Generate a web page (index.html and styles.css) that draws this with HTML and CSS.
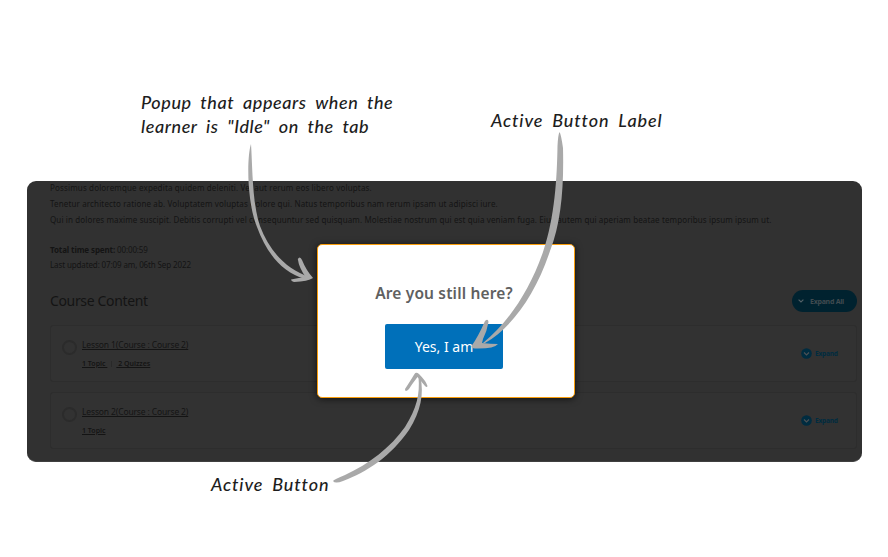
FILE: index.html
```
<!DOCTYPE html>
<html lang="en">
<head>
<meta charset="utf-8">
<title>Idle popup</title>
<link rel="stylesheet" href="styles.css">
</head>
<body>
<main class="canvas">
  <section class="screen">
    <div class="copy">
      <p class="l1">Possimus doloremque expedita quidem deleniti. Vel aut rerum eos libero voluptas.</p>
      <p class="l2">Tenetur architecto ratione ab. Voluptatem voluptas dolore qui. Natus temporibus nam rerum ipsam ut adipisci iure.</p>
      <p class="l3">Qui in dolores maxime suscipit. Debitis corrupti vel consequuntur sed quisquam. Molestiae nostrum qui est quia veniam fuga. Eius autem qui aperiam beatae temporibus ipsum ipsum ut.</p>
    </div>
    <div class="meta">
      <p><b>Total time spent:</b> 00:00:59</p>
      <p class="upd">Last updated: 07:09 am, 06th Sep 2022</p>
    </div>
    <div class="head">
      <h2>Course Content</h2>
      <span class="all"><svg width="6" height="4" viewBox="0 0 6 4"><path d="M.6.6 3 3 5.4.6"/></svg>Expand All</span>
    </div>
    <article class="card">
      <i class="ring"></i>
      <div class="info">
        <a class="title">Lesson 1(Course : Course 2)</a>
        <div class="sub"><u>1 Topic&nbsp;</u><i class="bar"></i><u>&nbsp;2 Quizzes</u></div>
      </div>
      <span class="expand"><svg width="11" height="11" viewBox="0 0 11 11"><circle cx="5.5" cy="5.5" r="5.3"/><path d="M3 4.5 5.5 7 8 4.5"/></svg><b>Expand</b></span>
    </article>
    <article class="card">
      <i class="ring"></i>
      <div class="info">
        <a class="title">Lesson 2(Course : Course 2)</a>
        <div class="sub"><u>1 Topic</u></div>
      </div>
      <span class="expand"><svg width="11" height="11" viewBox="0 0 11 11"><circle cx="5.5" cy="5.5" r="5.3"/><path d="M3 4.5 5.5 7 8 4.5"/></svg><b>Expand</b></span>
    </article>
  </section>
  <div class="popup">
    <h1><span>Are you still here?</span></h1>
    <button><span>Yes, I am</span></button>
  </div>
  <p class="note n1"><span class="n1a">Popup that appears when the</span><br><span class="n1b">learner is "Idle" on the tab</span></p>
  <p class="note n2">Active Button Label</p>
  <p class="note n3">Active Button</p>
  <svg class="arrows" width="888" height="557" viewBox="0 0 888 557">
    <path d="M251 144C246.500 158 247 203 257 227C267 254 282 272 305 279L310 279L310 277C285 269 269 250 260 226C252 203 252.500 165 251 144Z"/>
    <path d="M297.800 259Q300 255.500 302 260Q306 270 313 278Q308 281.500 294 282Q291 281 291 279.500Q299 277.500 306 277.500Q299 268 297.800 259Z"/>
    <path d="M559.500 132Q561 134 563 148C564 188 561 223 550 251C536 293 513 327 485 343L483 343C508 323 530 290 543 252C555 217 557 177 557.500 146Q558 135 559.500 132Z"/>
    <path d="M485 321Q488 318 488.500 322Q487 331 483 339L482 343Q490 344 498 344Q494 349 475 348.500Q471 348 471.500 346Q478 337 485 321Z"/>
    <path d="M333 481Q334 479.500 345 475C369 464 391 447 405 427C417 408 420 394 418.500 377L420.500 377C424 394 421 411 409 430C391 456 367 472 343 481Q335 484 333 481Z"/>
    <path d="M414.500 374Q416 371.500 419 374Q426 381 427.500 386Q427 388 425 386L417.500 377Q412 384 409 389Q405 393 405 389Q409 383 414.500 374Z"/>
  </svg>
</main>
</body>
</html>
```
FILE: styles.css
```
* { box-sizing: border-box; margin: 0; padding: 0; }
body { background: #fff; font-family: "Noto Sans", sans-serif; }
.canvas { position: relative; width: 888px; height: 557px; overflow: hidden; padding: 181px 26px 0 27px; }
.screen { height: 281px; border-radius: 9px; background: #313131; padding: 0 5px 0 23px; overflow: hidden; color: #141414; border-bottom: 1px solid #404040; }
.copy { height: 62px; font-size: 8px; line-height: 16px; white-space: nowrap; margin-top: -1px; }
.copy p { width: max-content; letter-spacing: .12px; }
.copy .l1 { letter-spacing: .15px; }
.copy .l2 { letter-spacing: .14px; }
.meta { font-size: 8px; line-height: 15px; letter-spacing: -.12px; }
.head { display: flex; justify-content: space-between; align-items: center; height: 22px; margin-top: 18px; }
.head h2 { font-size: 14px; font-weight: 400; line-height: 20px; letter-spacing: -.35px; }
.all { display: flex; align-items: center; gap: 6px; width: 65px; height: 22px; border-radius: 11px; background: #00222f; color: #414b50; font-size: 7px; letter-spacing: -.25px; font-weight: 700; padding-left: 6px; }
.all svg { fill: none; stroke: #536067; stroke-width: 1.1; }
.card { display: flex; height: 57px; margin-top: 13px; border: 1px solid #2d2d2d; border-radius: 3px; background: #323232; padding: 11px 17px 0 11px; }
.card + .card { margin-top: 10px; }
.ring { width: 15px; height: 15px; border: 2px solid #2b2b2b; border-radius: 50%; margin-top: 3px; }
.info { margin-left: 5px; flex: 1; }
.title { display: block; width: max-content; font-size: 8.500px; line-height: 16px; letter-spacing: -.14px; text-decoration: underline; }
.sub { display: flex; align-items: center; font-size: 7px; line-height: 12px; font-weight: 600; margin-top: 5px; }
.bar { width: 1px; height: 6px; background: #292929; margin: 0 4px; }
.expand { display: flex; align-items: center; height: 11px; gap: 3px; font-size: 6.500px; letter-spacing: -.15px; color: #002c40; margin-top: 11px; }
.expand b { width: 24px; white-space: nowrap; }
.expand circle { fill: #002c40; }
.expand path { fill: none; stroke: #4b5155; stroke-width: 1.2; }
.popup { position: absolute; left: 317px; top: 244px; width: 258px; height: 154px; border: 1px solid #f99d0b; border-radius: 5px; background: #fff; box-shadow: 0 1px 7px rgba(0,0,0,.65); display: flex; flex-direction: column; align-items: center; padding-top: 37px; }
.popup h1 { font-size: 15.500px; line-height: 22px; font-weight: 600; letter-spacing: .16px; color: #606060; white-space: nowrap; margin-right: 4px; }
.popup button { width: 118px; height: 45px; margin-top: 20px; margin-right: 4px; border: 0; border-radius: 2px; background: #0070ba; color: #fff; font: 14px "Noto Sans", sans-serif; white-space: nowrap; }
.note { position: absolute; color: #1d1d1d; font: italic 500 18px/24px Lato, sans-serif; letter-spacing: .57px; word-spacing: 4px; white-space: nowrap; }
.n1 { left: 141px; top: 90px; }
.n2 { left: 491px; top: 108px; letter-spacing: .86px; }
.n3 { left: 211px; top: 472px; letter-spacing: .86px; }
.arrows { position: absolute; left: 0; top: 0; fill: #a9a9a9; }
```
